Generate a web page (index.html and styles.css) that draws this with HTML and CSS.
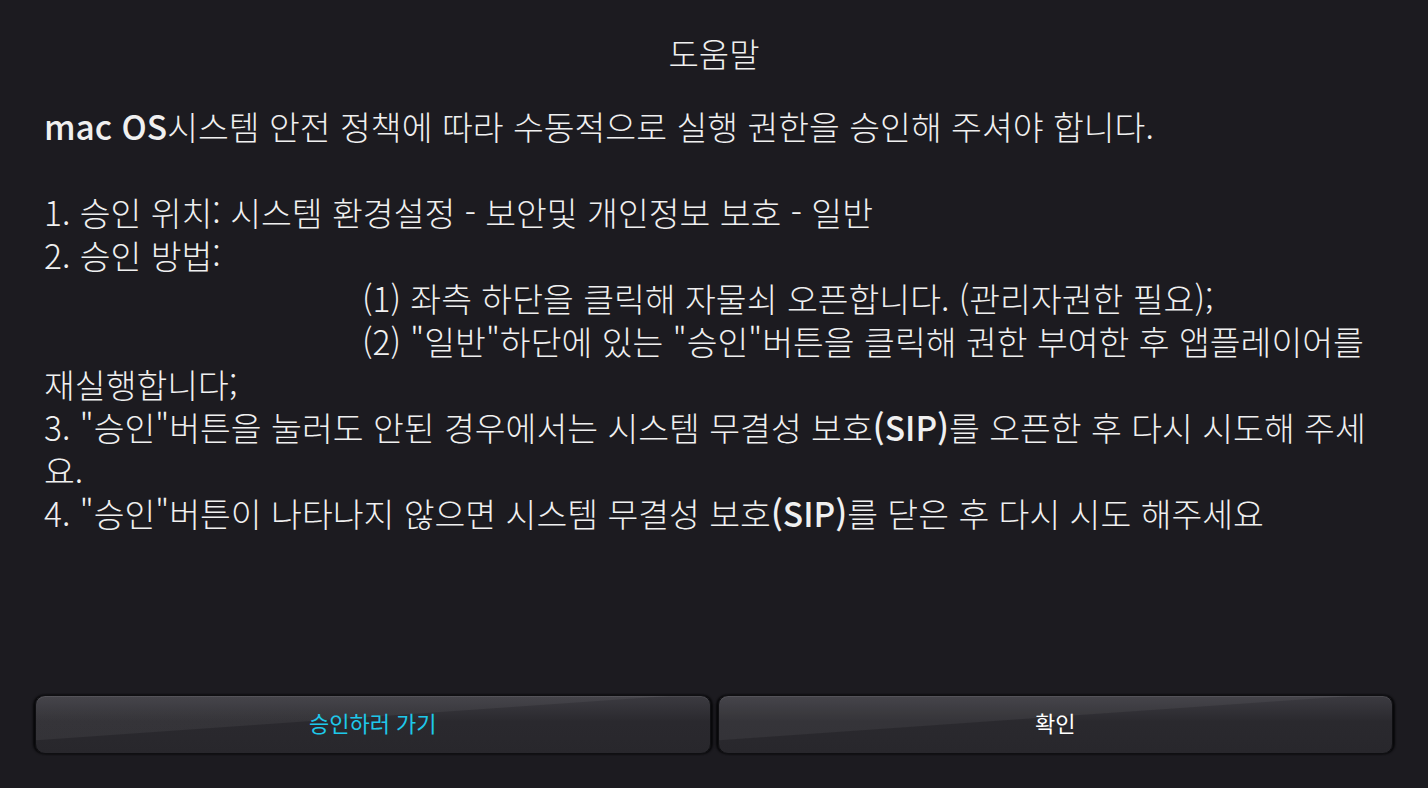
FILE: index.html
```html
<!DOCTYPE html>
<html lang="ko">
<head>
  <meta charset="UTF-8" />
  <meta name="viewport" content="width=device-width, initial-scale=1.0"/>
  <title>도움말</title>
  <link rel="stylesheet" href="styles.css">
</head>
<body>

  <div class="dialog">
    <h1 class="title">도움말</h1>

    <div class="content">
      <p><span class="latin">mac OS</span>시스템 안전 정책에 따라 수동적으로 실행 권한을 승인해 주셔야 합니다.</p>
      <p class="blank"></p>
      <p>1. 승인 위치: 시스템 환경설정 - 보안및 개인정보 보호 - 일반</p>
      <p>2. 승인 방법:</p>
      <p><span class="indent"></span>(1) 좌측 하단을 클릭해 자물쇠 오픈합니다. (관리자권한 필요);</p>
      <p><span class="indent"></span>(2) "일반"하단에 있는 "승인"버튼을 클릭해 권한 부여한 후 앱플레이어를<br>재실행합니다;</p>
      <p>3. "승인"버튼을 눌러도 안된 경우에서는 시스템 무결성 보호<span class="latin">(SIP)</span>를 오픈한 후 다시 시도해 주세<br>요.</p>
      <p>4. "승인"버튼이 나타나지 않으면 시스템 무결성 보호<span class="latin">(SIP)</span>를 닫은 후 다시 시도 해주세요</p>
    </div>

    <div class="actions">
      <button class="btn btn-go">승인하러 가기</button>
      <button class="btn">확인</button>
    </div>
  </div>

</body>
</html>
```

FILE: styles.css
```css
html, body {
  margin: 0;
  height: 100%;
}

body {
  background-color: #1c1b20;
  color: #f0f0f0;
  font-family: "Noto Sans CJK KR", "Noto Sans", sans-serif;
}

.dialog {
  height: 100%;
  display: flex;
  flex-direction: column;
  box-sizing: border-box;
  padding: 32px 35px 34px;
}

.title {
  margin: 0;
  font-size: 33px;
  font-weight: 300;
  line-height: 43px;
  text-align: center;
}

.content {
  margin-top: 29px;
  padding: 0 9px;
  font-size: 33.5px;
  font-weight: 300;
  line-height: 43px;
}

.content p {
  margin: 0;
  white-space: nowrap;
}

.content .blank {
  height: 43px;
}

.latin {
  font-weight: 500;
}

.indent {
  display: inline-block;
  width: 318px;
}

.actions {
  margin-top: auto;
  display: flex;
  gap: 7px;
}

.btn {
  flex: 1;
  height: 59px;
  padding: 0 0 6px;
  border: 1px solid #0f0f12;
  border-radius: 10px;
  background:
    linear-gradient(176deg, rgba(255, 255, 255, 0.05) 0 42%, rgba(255, 255, 255, 0) 43%),
    linear-gradient(#3c3b41, #2a292e 45%, #28272c);
  box-shadow: -2px 0 2px #08080a, 2px 0 2px #08080a, inset 0 1px 0 rgba(255, 255, 255, 0.08);
  color: #ffffff;
  font-family: "Noto Sans CJK KR", sans-serif;
  font-size: 22px;
  cursor: pointer;
}

.btn-go {
  color: #1ec8ea;
}
```
